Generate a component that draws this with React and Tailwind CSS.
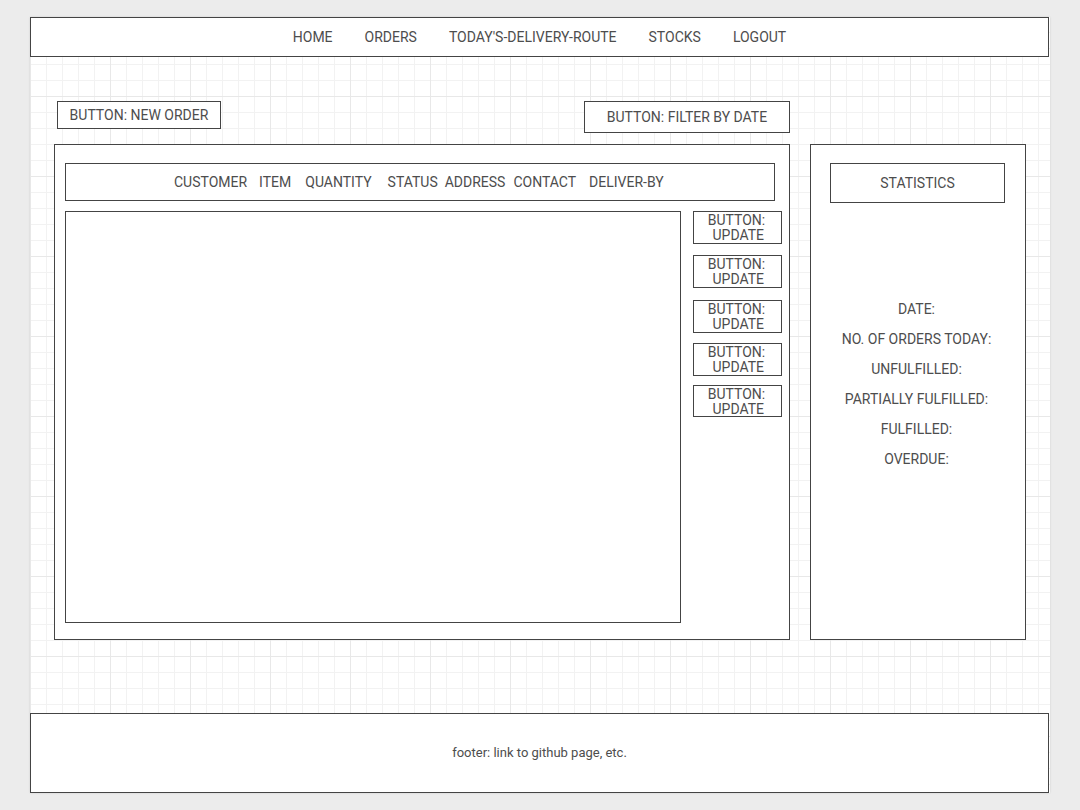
const navItems = [
  { label: "HOME" },
  { label: "ORDERS" },
  { label: "TODAY'S-DELIVERY-ROUTE" },
  { label: "STOCKS" },
  { label: "LOGOUT" },
];

const columns = [
  { label: "CUSTOMER", ml: "ml-0" },
  { label: "ITEM", ml: "ml-[12px]" },
  { label: "QUANTITY", ml: "ml-[14px]" },
  { label: "STATUS", ml: "ml-[16px]" },
  { label: "ADDRESS", ml: "ml-[7px]" },
  { label: "CONTACT", ml: "ml-[8px]" },
  { label: "DELIVER-BY", ml: "ml-[13px]" },
];

const updateButtons = [
  "mt-0 h-[33px]",
  "mt-[11px] h-[33px]",
  "mt-[12px] h-[33px]",
  "mt-[10px] h-[33px]",
  "mt-[9px] h-[32px]",
];

const stats = [
  "DATE:",
  "NO. OF ORDERS TODAY:",
  "UNFULFILLED:",
  "PARTIALLY FULFILLED:",
  "FULFILLED:",
  "OVERDUE:",
];

export default function App() {
  return (
    <div className="min-h-[810px] bg-[#ececec] px-[30px] pt-[17px] font-['Roboto',sans-serif] text-[14px] text-[#4d4d4d]">
      <div className="flex w-[1020px] flex-col bg-white bg-[linear-gradient(#e8e8e8_1px,transparent_1px),linear-gradient(90deg,#e8e8e8_1px,transparent_1px),linear-gradient(#f2f2f2_1px,transparent_1px),linear-gradient(90deg,#f2f2f2_1px,transparent_1px)] bg-[size:80px_80px,80px_80px,16px_16px,16px_16px] bg-[position:0_-1px] shadow-[0_0_2px_rgba(0,0,0,0.12)]">
        {/* Header / nav */}
        <header className="flex h-[40px] w-[1019px] items-center justify-center gap-[32px] border border-[#444] bg-white pb-[1px]">
          {navItems.map((item) => (
            <span key={item.label} className="leading-none">
              {item.label}
            </span>
          ))}
        </header>

        {/* Canvas area */}
        <main className="flex h-[656px] flex-col pt-[44px]">
          <div className="flex items-start">
            <div className="ml-[27px] flex h-[28px] w-[164px] items-center justify-center border border-[#444] bg-white">
              BUTTON: NEW ORDER
            </div>
            <div className="ml-[363px] flex h-[32px] w-[206px] items-center justify-center border border-[#444] bg-white pt-[1px]">
              BUTTON: FILTER BY DATE
            </div>
          </div>

          <div className="mt-[11px] flex">
            {/* Orders panel */}
            <section className="ml-[24px] h-[496px] w-[736px] border border-[#444] bg-white pl-[10px] pt-[18px]">
              <div className="flex h-[38px] w-[710px] items-center border border-[#444] pl-[108px]">
                {columns.map((c) => (
                  <span key={c.label} className={c.ml}>
                    {c.label}
                  </span>
                ))}
              </div>
              <div className="mt-[10px] flex">
                <div className="h-[412px] w-[616px] border border-[#444]" />
                <div className="ml-[12px] flex w-[89px] flex-col">
                  {updateButtons.map((cls, i) => (
                    <div
                      key={i}
                      className={`${cls} flex flex-col items-center justify-center border border-[#444] pt-[1px] leading-[15px]`}
                    >
                      <span className="-ml-[2px]">BUTTON:</span>
                      <span className="-ml-[2px]">&nbsp;UPDATE</span>
                    </div>
                  ))}
                </div>
              </div>
            </section>

            {/* Statistics panel */}
            <aside className="ml-[20px] h-[496px] w-[216px] border border-[#444] bg-white pl-[19px] pt-[18px]">
              <div className="flex h-[40px] w-[175px] items-center justify-center border border-[#444] pt-[1px]">
                STATISTICS
              </div>
              <ul className="mt-[91px] w-[175px] text-center">
                {stats.map((s) => (
                  <li key={s} className="-ml-[2px] h-[30px] leading-[30px]">
                    {s}
                  </li>
                ))}
              </ul>
            </aside>
          </div>
        </main>

        {/* Footer */}
        <footer className="flex h-[80px] w-[1019px] items-center justify-center border border-[#444] bg-white text-[13px]">
          footer: link to github page, etc.
        </footer>
      </div>
    </div>
  );
}
